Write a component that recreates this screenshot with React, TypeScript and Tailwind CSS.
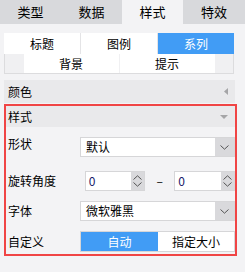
import React from 'react';

const font = { fontFamily: '"Noto Sans CJK SC", "Microsoft YaHei", sans-serif' };

function Chevron({ up }: { up?: boolean }) {
  return (
    <svg width="9" height="5" viewBox="0 0 9 5" className="block">
      <path d={up ? 'M0.5 4.5 L4.5 0.8 L8.5 4.5' : 'M0.5 0.5 L4.5 4.2 L8.5 0.5'} fill="none" stroke="#555" strokeWidth="1" />
    </svg>
  );
}

function Select({ value }: { value: string }) {
  return (
    <div className="flex h-[20px] w-[155px] border border-[#d6d6d8] bg-white">
      <div className="flex-1 pl-[5px] text-[12px] leading-[18px] text-black">{value}</div>
      <div className="flex w-[19px] items-center justify-center bg-[#d9d9dc]">
        <Chevron />
      </div>
    </div>
  );
}

function Spinner() {
  return (
    <div className="flex h-[20px] w-[61px] border border-[#d6d6d8] bg-white">
      <div className="flex-1 pl-[3px] text-[12px] leading-[18px] text-[#1a1a6a]">0</div>
      <div className="flex w-[13px] flex-col items-center justify-around bg-[#d9d9dc] py-[2px]">
        <Chevron up />
        <Chevron />
      </div>
    </div>
  );
}

export default function App() {
  const tabs = ['类型', '数据', '样式', '特效'];
  return (
    <div className="h-[272px] w-[245px] overflow-hidden bg-[#f3f3f5] text-black" style={font}>
      {/* top tabs */}
      <div className="grid h-[24px] grid-cols-[61px_61px_61px_62px] bg-[#d8d9dc]">
        {tabs.map((t) => (
          <div
            key={t}
            className={`flex items-center justify-center text-[13px] ${t === '样式' ? 'bg-[#f3f3f5]' : ''}`}
          >
            {t}
          </div>
        ))}
      </div>

      {/* sub tabs */}
      <div className="ml-[4px] mt-[9px] w-[230px]">
        <div className="grid h-[21px] grid-cols-3 gap-[1px] bg-[#e4e4e6] text-[12px]">
          <div className="flex items-center justify-center bg-white">标题</div>
          <div className="flex items-center justify-center bg-white">图例</div>
          <div className="flex items-center justify-center bg-[#419cf5] text-white">系列</div>
        </div>
        <div className="flex h-[20px] justify-center gap-[1px] border-x border-b border-[#dcdcde] bg-[#f0f0f2] text-[12px]">
          <div className="flex w-[95px] items-center justify-center bg-white">背景</div>
          <div className="flex w-[95px] items-center justify-center bg-white">提示</div>
        </div>
      </div>

      {/* 颜色 header */}
      <div className="ml-[4px] mt-[6px] flex h-[23px] w-[231px] items-center justify-between bg-[#e9e9eb] pl-[4px] pr-[7px] text-[12px]">
        <span>颜色</span>
        <svg width="4" height="7" viewBox="0 0 4 7">
          <path d="M4 0 L0 3.5 L4 7 Z" fill="#a5a5a7" />
        </svg>
      </div>

      {/* 样式 section */}
      <div className="ml-[4px] mt-[1px] h-[152px] w-[233px] border-2 border-[#f04545]">
        <div className="flex h-[21px] items-center justify-between bg-[#e9e9eb] pl-[2px] pr-[7px] text-[12px]">
          <span>样式</span>
          <svg width="8" height="4" viewBox="0 0 8 4">
            <path d="M0 0 L8 0 L4 4 Z" fill="#a5a5a7" />
          </svg>
        </div>

        <div className="flex flex-col pl-[2px] pt-[10px] text-[12px]">
          <div className="flex items-center">
            <span className="w-[72px] -translate-y-[3px]">形状</span>
            <Select value="默认" />
          </div>
          <div className="mt-[14px] flex h-[19px] items-center">
            <span className="w-[77px]">旋转角度</span>
            <Spinner />
            <span className="w-[29px] text-center">–</span>
            <Spinner />
          </div>
          <div className="mt-[11px] flex items-center">
            <span className="w-[72px]">字体</span>
            <Select value="微软雅黑" />
          </div>
          <div className="mt-[10px] flex items-center">
            <span className="w-[72px]">自定义</span>
            <div className="flex h-[21px] w-[155px] border border-[#d6d6d8] bg-white">
              <div className="flex w-[77px] items-center justify-center bg-[#419cf5] text-white">自动</div>
              <div className="flex flex-1 items-center justify-center">指定大小</div>
            </div>
          </div>
        </div>
      </div>
    </div>
  );
}
